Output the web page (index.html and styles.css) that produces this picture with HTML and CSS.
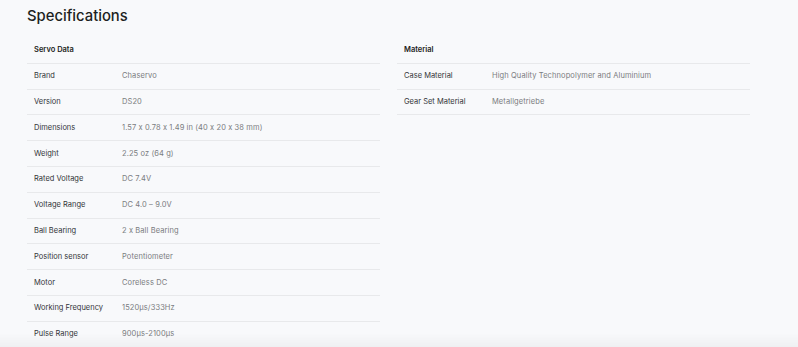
FILE: index.html
```html
<!DOCTYPE html>
<html>
<head>
<meta charset="utf-8">
<link rel="stylesheet" href="styles.css">
</head>
<body>
<main class="page">
  <h1 class="title">Specifications</h1>
  <div class="tables">
    <section class="spec">
      <div class="spec-head">Servo Data</div>
      <div class="row"><span class="label">Brand</span><span class="value">Chaservo</span></div>
      <div class="row"><span class="label">Version</span><span class="value">DS20</span></div>
      <div class="row"><span class="label">Dimensions</span><span class="value">1.57 x 0.78 x 1.49 in (40 x 20 x 38 mm)</span></div>
      <div class="row"><span class="label">Weight</span><span class="value">2.25 oz (64 g)</span></div>
      <div class="row"><span class="label">Rated Voltage</span><span class="value">DC 7.4V</span></div>
      <div class="row"><span class="label">Voltage Range</span><span class="value">DC 4.0 – 9.0V</span></div>
      <div class="row"><span class="label">Ball Bearing</span><span class="value">2 x Ball Bearing</span></div>
      <div class="row"><span class="label">Position sensor</span><span class="value">Potentiometer</span></div>
      <div class="row"><span class="label">Motor</span><span class="value">Coreless DC</span></div>
      <div class="row"><span class="label">Working Frequency</span><span class="value">1520µs/333Hz</span></div>
      <div class="row"><span class="label">Pulse Range</span><span class="value">900µs-2100µs</span></div>
    </section>
    <section class="spec">
      <div class="spec-head">Material</div>
      <div class="row"><span class="label">Case Material</span><span class="value">High Quality Technopolymer and Aluminium</span></div>
      <div class="row"><span class="label">Gear Set Material</span><span class="value">Metallgetriebe</span></div>
    </section>
  </div>
</main>
<div class="bottom-shade"></div>
</body>
</html>
```
FILE: styles.css
```css
html, body {
  margin: 0;
  padding: 0;
  background: #f8f9fb;
  font-family: Inter, "Noto Sans", sans-serif;
  font-feature-settings: "calt" 0;
}

.page {
  padding: 6px 27px 0;
}

.title {
  margin: 0 0 12px;
  font-size: 14.8px;
  line-height: 20px;
  font-weight: 500;
  color: #1d1f22;
}

.tables {
  display: grid;
  grid-template-columns: 353px 353px;
  column-gap: 17px;
  align-items: start;
}

.spec-head,
.row {
  box-sizing: border-box;
  height: 25.8px;
  border-bottom: 1px solid #e8e9eb;
  display: grid;
  grid-template-columns: 95px 1fr;
  align-items: center;
  font-size: 7.5px;
  line-height: 10px;
}

.spec-head {
  display: flex;
  padding: 0 7px;
  font-weight: 600;
  color: #1d1f22;
}

.label {
  padding-left: 7px;
  color: #333539;
}

.value {
  color: #7a7c80;
  letter-spacing: 0.1px;
}

.bottom-shade {
  position: fixed;
  left: 0;
  right: 0;
  bottom: 0;
  height: 14px;
  background: linear-gradient(to bottom, rgba(0,0,0,0), rgba(0,0,0,0.035));
  pointer-events: none;
}
```
